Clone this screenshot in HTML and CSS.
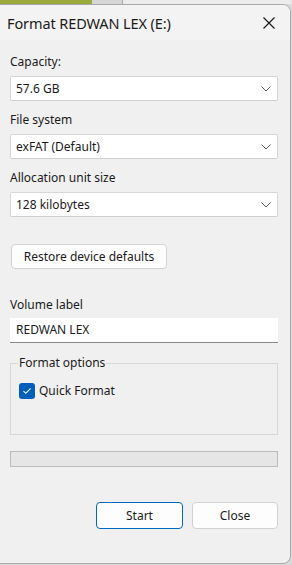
FILE: index.html
```html
<!DOCTYPE html>
<html>
<head>
<meta charset="utf-8">
<title>Format REDWAN LEX (E:)</title>
<link rel="stylesheet" href="styles.css">
</head>
<body>
<div class="desk-top">
  <div class="desk-green"></div>
  <div class="desk-gray"></div>
  <div class="desk-line"></div>
  <div class="desk-light"></div>
</div>
<div class="dialog">
  <div class="titlebar">
    <span class="title">Format REDWAN LEX (E:)</span>
    <svg class="close-x" width="14" height="14" viewBox="0 0 14 14"><path d="M1.5 1.5 L12.5 12.5 M12.5 1.5 L1.5 12.5" stroke="#1a1a1a" stroke-width="1.2" fill="none"/></svg>
  </div>
  <div class="content">
    <div class="field">
      <div class="label">Capacity:</div>
      <div class="select"><span>57.6 GB</span><svg class="chev" width="10" height="6" viewBox="0 0 10 6"><path d="M0.5 0.5 L5 5 L9.5 0.5" stroke="#5a5a5a" stroke-width="1" fill="none"/></svg></div>
    </div>
    <div class="field">
      <div class="label">File system</div>
      <div class="select"><span>exFAT (Default)</span><svg class="chev" width="10" height="6" viewBox="0 0 10 6"><path d="M0.5 0.5 L5 5 L9.5 0.5" stroke="#5a5a5a" stroke-width="1" fill="none"/></svg></div>
    </div>
    <div class="field">
      <div class="label">Allocation unit size</div>
      <div class="select"><span>128 kilobytes</span><svg class="chev" width="10" height="6" viewBox="0 0 10 6"><path d="M0.5 0.5 L5 5 L9.5 0.5" stroke="#5a5a5a" stroke-width="1" fill="none"/></svg></div>
    </div>
    <button class="btn restore">Restore device defaults</button>
    <div class="label vol-label">Volume label</div>
    <div class="textbox">REDWAN LEX</div>
    <fieldset class="group">
      <legend>Format options</legend>
      <label class="check"><span class="box"><svg width="10" height="8" viewBox="0 0 10 8"><path d="M1.5 4.2 L3.8 6.3 L8.5 1.5" stroke="#fff" stroke-width="1.1" fill="none"/></svg></span>Quick Format</label>
    </fieldset>
    <div class="progress"></div>
    <div class="actions">
      <button class="btn primary">Start</button>
      <button class="btn">Close</button>
    </div>
  </div>
</div>
</body>
</html>
```
FILE: styles.css
```css
html, body {
  margin: 0;
  padding: 0;
}
body {
  width: 292px;
  height: 565px;
  overflow: hidden;
  background: #d9d9d9;
  font-family: "Noto Sans", "Open Sans", sans-serif;
  color: #1a1a1a;
}
.desk-top {
  display: flex;
  height: 4px;
}
.desk-green { width: 92px; background: #9aab3c; }
.desk-gray { width: 30px; background: #d6d6d6; }
.desk-line { width: 1px; background: #a8a8a8; }
.desk-light { flex: 1; background: #ececec; }
.dialog {
  box-sizing: border-box;
  margin-left: -1px;
  width: 292px;
  height: 560px;
  background: #f0f0f0;
  border: 1px solid #a9a9a9;
  border-radius: 0 8px 8px 0;
  overflow: hidden;
  display: flex;
  flex-direction: column;
}
.titlebar {
  height: 35px;
  background: #f3f3f3;
  display: flex;
  align-items: center;
  justify-content: space-between;
  padding: 0 14px 0 7px;
}
.title {
  font-size: 14.5px;
  letter-spacing: -0.1px;
}
.close-x { display: block; }
.content {
  padding: 14px 12px 0 10px;
  display: flex;
  flex-direction: column;
}
.label {
  font-size: 12px;
  line-height: 16px;
  height: 16px;
}
.field {
  display: flex;
  flex-direction: column;
  gap: 6px;
  margin-bottom: 11px;
}
.select {
  box-sizing: border-box;
  height: 25px;
  background: #fff;
  border: 1px solid #d6d6d6;
  border-bottom-color: #cfcfcf;
  border-radius: 2px;
  display: flex;
  align-items: center;
  justify-content: space-between;
  padding: 0 6px 0 5px;
  font-size: 12px;
}
.chev { display: block; }
.btn {
  box-sizing: border-box;
  font-family: inherit;
  font-size: 12px;
  color: #1a1a1a;
  background: #fdfdfd;
  border: 1px solid #d2d2d2;
  border-radius: 4px;
  height: 26px;
  padding: 0;
}
.restore {
  align-self: flex-start;
  width: 156px;
  height: 25px;
  margin-top: 16px;
  margin-left: 1px;
}
.vol-label {
  margin-top: 28px;
}
.textbox {
  box-sizing: border-box;
  margin-top: 5px;
  height: 25px;
  background: #fff;
  border-bottom: 1px solid #8a8a8a;
  font-size: 12px;
  line-height: 24px;
  padding-left: 6px;
}
.group {
  box-sizing: border-box;
  margin: 12px 0 0 0;
  padding: 11px 0 0 8px;
  height: 80px;
  border: 1px solid #d8d8d8;
  min-width: 0;
}
.group legend {
  font-size: 12px;
  padding: 0 1px;
  margin-left: -1px;
  line-height: 16px;
}
.check {
  display: flex;
  align-items: center;
  gap: 4px;
  font-size: 12px;
}
.box {
  width: 16px;
  height: 16px;
  border-radius: 3px;
  background: #005fb8;
  display: flex;
  align-items: center;
  justify-content: center;
}
.box svg { display: block; }
.progress {
  box-sizing: border-box;
  margin-top: 16px;
  height: 16px;
  background: #e6e6e6;
  border: 1px solid #bcbcbc;
}
.actions {
  margin-top: 35px;
  display: flex;
  justify-content: flex-end;
  gap: 9px;
}
.actions .btn {
  width: 86px;
  height: 27px;
}
.actions .primary {
  width: 87px;
  border-color: #0067c0;
}
```
